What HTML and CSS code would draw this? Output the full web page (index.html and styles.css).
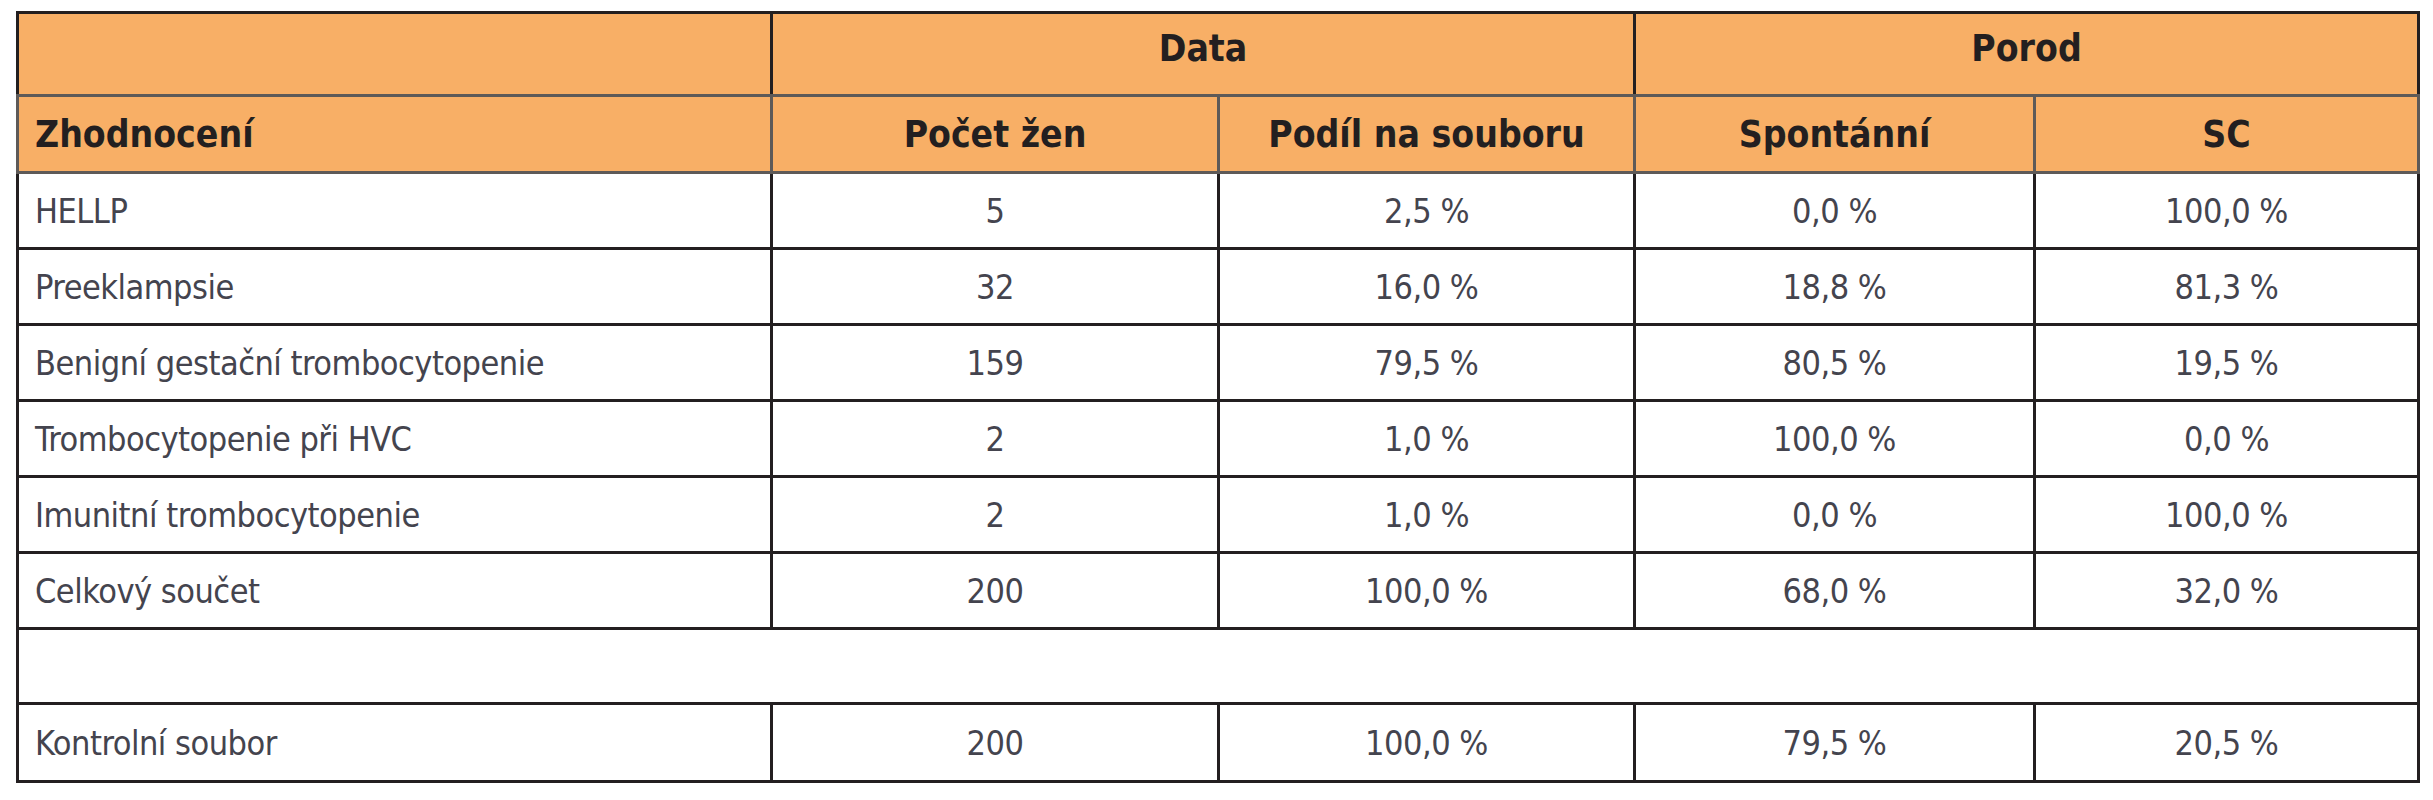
FILE: index.html
```html
<!DOCTYPE html>
<html lang="cs">
<head>
<meta charset="utf-8">
<title>Zhodnocení</title>
<link rel="stylesheet" href="styles.css">
</head>
<body>
<table class="tbl">
  <colgroup>
    <col class="c1"><col class="c2"><col class="c3"><col class="c4"><col class="c5">
  </colgroup>
  <thead>
    <tr class="h1">
      <th class="first"></th>
      <th colspan="2">Data</th>
      <th colspan="2">Porod</th>
    </tr>
    <tr class="h2">
      <th class="left">Zhodnocení</th>
      <th>Počet žen</th>
      <th>Podíl na souboru</th>
      <th>Spontánní</th>
      <th>SC</th>
    </tr>
  </thead>
  <tbody>
    <tr><td class="left">HELLP</td><td>5</td><td>2,5 %</td><td>0,0 %</td><td>100,0 %</td></tr>
    <tr><td class="left">Preeklampsie</td><td>32</td><td>16,0 %</td><td>18,8 %</td><td>81,3 %</td></tr>
    <tr><td class="left">Benigní gestační trombocytopenie</td><td>159</td><td>79,5 %</td><td>80,5 %</td><td>19,5 %</td></tr>
    <tr><td class="left">Trombocytopenie při HVC</td><td>2</td><td>1,0 %</td><td>100,0 %</td><td>0,0 %</td></tr>
    <tr><td class="left">Imunitní trombocytopenie</td><td>2</td><td>1,0 %</td><td>0,0 %</td><td>100,0 %</td></tr>
    <tr><td class="left">Celkový součet</td><td>200</td><td>100,0 %</td><td>68,0 %</td><td>32,0 %</td></tr>
    <tr class="blank"><td colspan="5"></td></tr>
    <tr class="last"><td class="left">Kontrolní soubor</td><td>200</td><td>100,0 %</td><td>79,5 %</td><td>20,5 %</td></tr>
  </tbody>
</table>
</body>
</html>
```

FILE: styles.css
```css
html, body {
  margin: 0;
  padding: 0;
  background: #ffffff;
}

.tbl {
  margin: 11px 0 0 16px;
  width: 2401px;
  border-collapse: collapse;
  table-layout: fixed;
  border: 3px solid #231f20;
  font-family: "DejaVu Sans Condensed", "Liberation Sans", sans-serif;
}

.c1 { width: 754px; }
.c2 { width: 447px; }
.c3 { width: 416px; }
.c4 { width: 400px; }
.c5 { width: 384px; }

th {
  background: #f8af66;
  color: #231f20;
  font-size: 37px;
  font-weight: bold;
  text-align: center;
  padding: 0 16px;
}

.h1 th {
  height: 68px;
  border-left: 3px solid #231f20;
  border-right: 3px solid #231f20;
  border-bottom: 3px solid #5e5a58;
  vertical-align: middle;
  padding-bottom: 12px;
}

.h2 th {
  height: 74px;
  border: 3px solid #5e5a58;
}

th.left, td.left {
  text-align: left;
}

td {
  height: 73px;
  color: #44444e;
  font-size: 34px;
  letter-spacing: -0.5px;
  text-align: center;
  padding: 0 16px;
  border: 3px solid #231f20;
  vertical-align: middle;
}

.blank td {
  height: 72px;
}

.last td {
  height: 75px;
}
```
